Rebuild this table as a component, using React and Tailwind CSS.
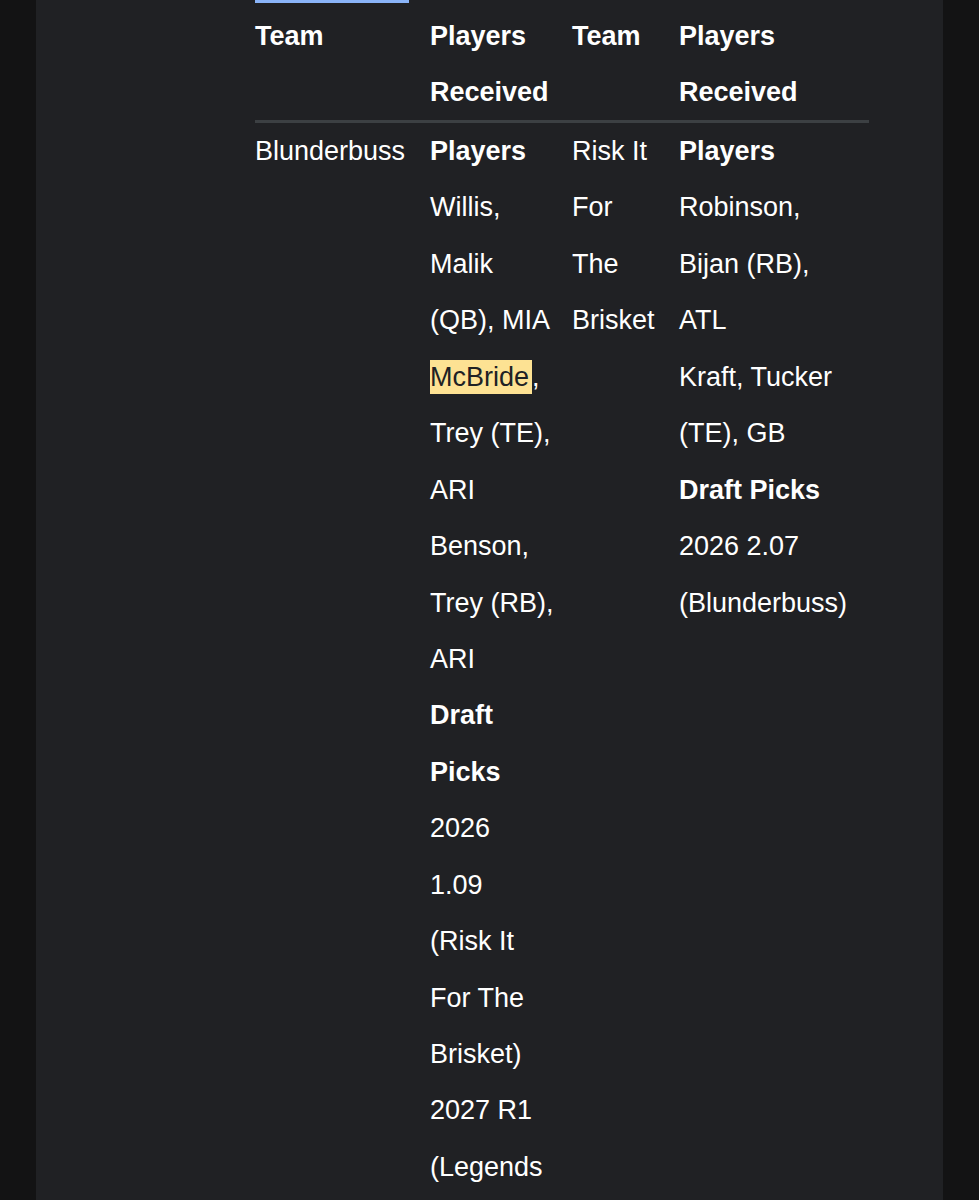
import React from "react";

const leftLines = [
  { bold: true, text: "Players" },
  { text: "Willis," },
  { text: "Malik" },
  { text: "(QB), MIA" },
  { text: "McBride", mark: true, tail: "," },
  { text: "Trey (TE)," },
  { text: "ARI" },
  { text: "Benson," },
  { text: "Trey (RB)," },
  { text: "ARI" },
  { bold: true, text: "Draft" },
  { bold: true, text: "Picks" },
  { text: "2026" },
  { text: "1.09" },
  { text: "(Risk It" },
  { text: "For The" },
  { text: "Brisket)" },
  { text: "2027 R1" },
  { text: "(Legends" },
];

const rightLines = [
  { bold: true, text: "Players" },
  { text: "Robinson," },
  { text: "Bijan (RB)," },
  { text: "ATL" },
  { text: "Kraft, Tucker" },
  { text: "(TE), GB" },
  { bold: true, text: "Draft Picks" },
  { text: "2026 2.07" },
  { text: "(Blunderbuss)" },
];

function Lines({ lines }) {
  return (
    <div>
      {lines.map((l, i) => (
        <div key={i} className={`whitespace-nowrap ${l.bold ? "font-bold" : ""}`}>
          {l.mark ? (
            <>
              <span className="bg-[#fde293] text-[#202124] py-[2px] pr-[3px]">{l.text}</span>
              {l.tail}
            </>
          ) : (
            l.text
          )}
        </div>
      ))}
    </div>
  );
}

export default function App() {
  return (
    <div className="h-[1200px] overflow-hidden flex bg-[#131314] font-['Liberation_Sans',Arial,sans-serif] text-[27px] leading-[56px] text-white">
      <div className="w-[36px] shrink-0" />
      <div className="w-[907px] shrink-0 bg-[#202124] pl-[219px]">
        {/* link cut off at the top */}
        <div className="h-[8px] overflow-hidden flex items-end">
          <span className="bg-[#8ab4f8] w-[154px] h-[3px] mb-[5px] inline-block" />
        </div>
        <table className="border-collapse w-[614px] table-fixed">
          <colgroup>
            <col className="w-[175px]" />
            <col className="w-[142px]" />
            <col className="w-[107px]" />
            <col className="w-[190px]" />
          </colgroup>
          <thead>
            <tr className="border-b-[3px] border-[#3c4043] font-bold text-left align-top">
              <th className="p-0 font-bold">Team</th>
              <th className="p-0 font-bold">
                <div>Players</div>
                <div>Received</div>
              </th>
              <th className="p-0 font-bold">Team</th>
              <th className="p-0 font-bold">
                <div>Players</div>
                <div>Received</div>
              </th>
            </tr>
          </thead>
          <tbody className="leading-[56.44px]">
            <tr className="align-top">
              <td className="p-0">Blunderbuss</td>
              <td className="p-0">
                <Lines lines={leftLines} />
              </td>
              <td className="p-0">
                <div>Risk It</div>
                <div>For</div>
                <div>The</div>
                <div>Brisket</div>
              </td>
              <td className="p-0">
                <Lines lines={rightLines} />
              </td>
            </tr>
          </tbody>
        </table>
      </div>
      <div className="flex-1" />
    </div>
  );
}
